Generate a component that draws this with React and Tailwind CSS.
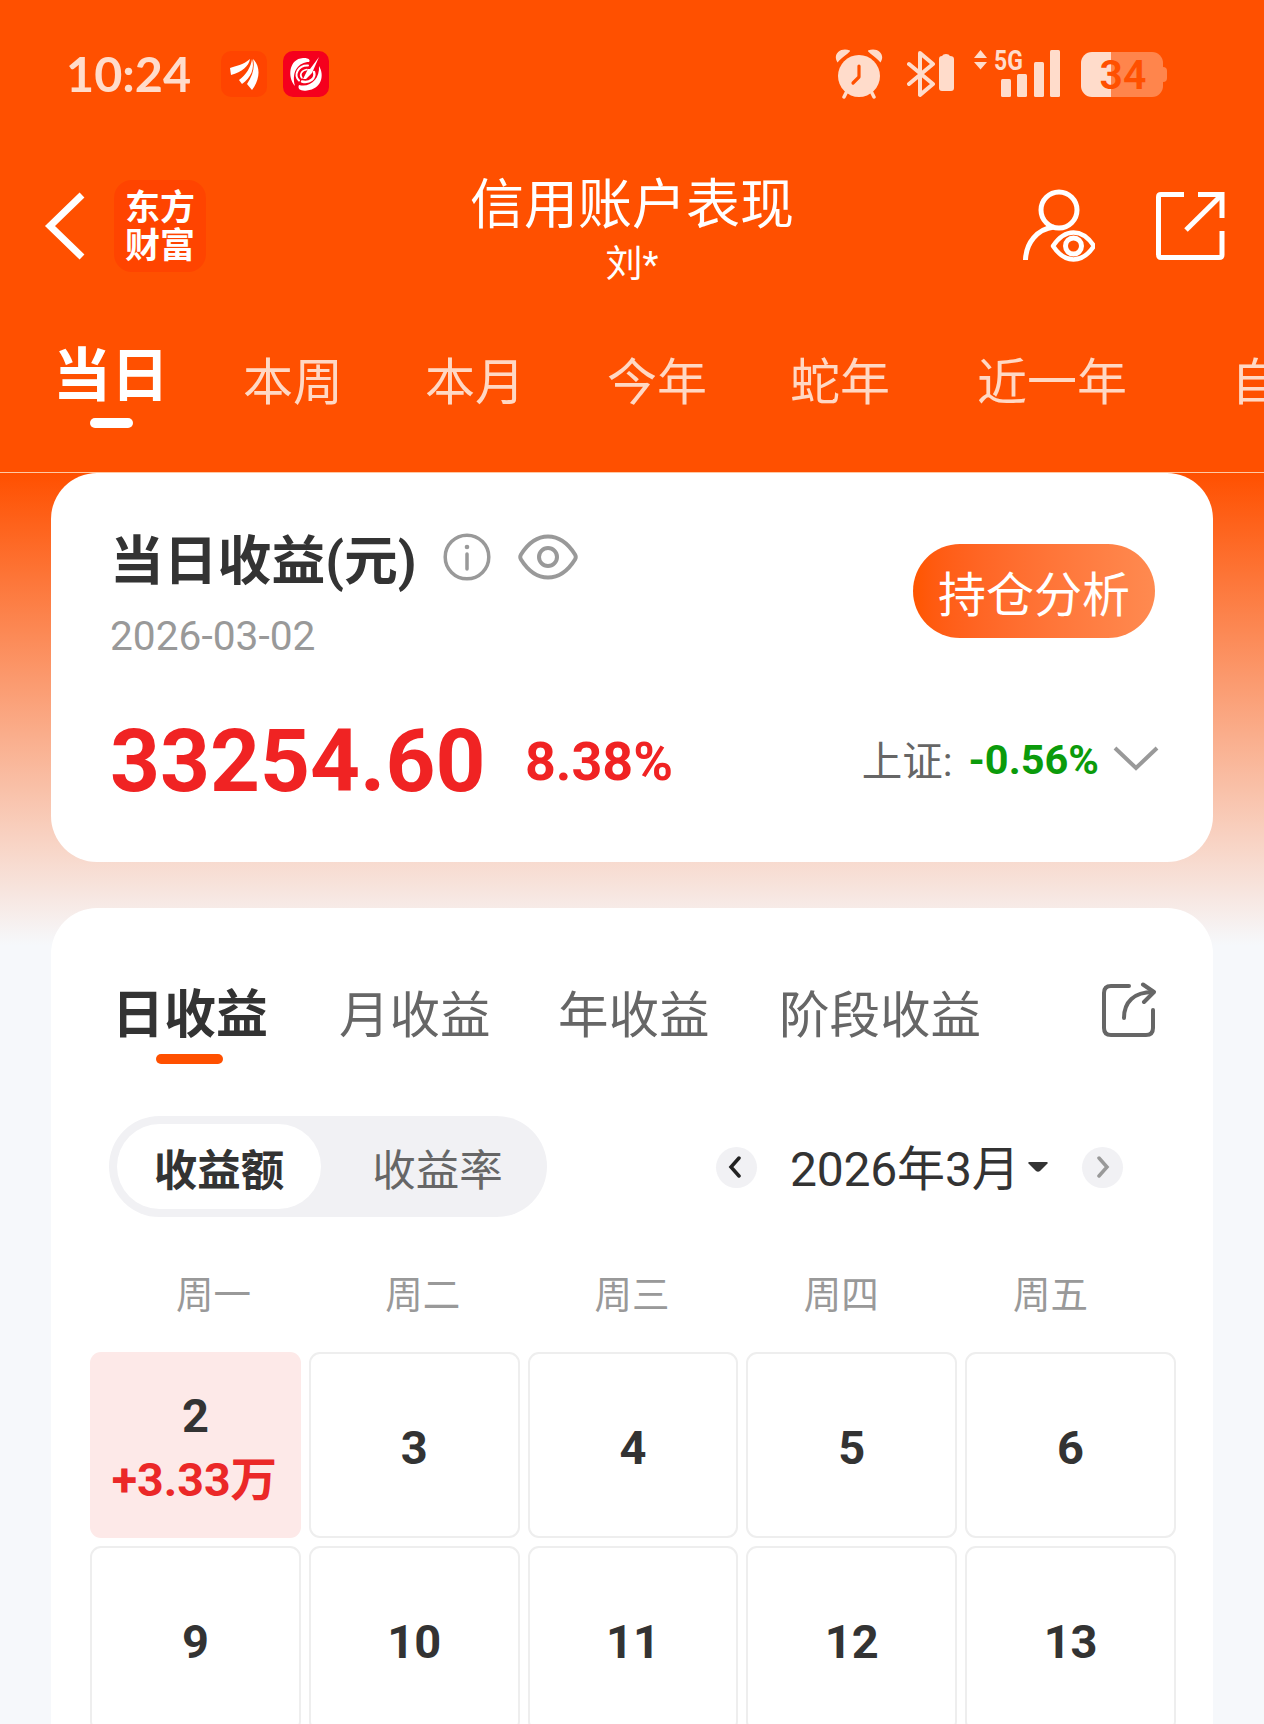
const PERIODS = [
  { label: "本周", className: "w-[182px]" },
  { label: "本月", className: "w-[182px]" },
  { label: "今年", className: "w-[183px]" },
  { label: "蛇年", className: "w-[187px]" },
  { label: "近一年", className: "w-[254px]" },
  { label: "自", className: "w-[160px]" },
]

const WEEKDAYS = ["周一", "周二", "周三", "周四", "周五"]

const DAYS = [
  { day: 2, profit: "+3.33万" },
  { day: 3 }, { day: 4 }, { day: 5 }, { day: 6 },
  { day: 9 }, { day: 10 }, { day: 11 }, { day: 12 }, { day: 13 },
]

function StatusBar() {
  return (
    <div className="h-[148px] flex items-center justify-between pl-[66px] pr-[97px] text-[#ffdccb]">
      <div className="flex items-center">
        <span className="w-[155px] -mt-[3px] font-['Lato'] font-bold text-[48.5px] leading-[52px]">10:24</span>

        <svg width="46" height="46" viewBox="0 0 46 46" className="mr-4">
          <rect width="46" height="46" rx="10" fill="#ff4400" />
          <g fill="#fff">
            <path d="M9 17C15 15 22 14 29 8C28 15 21 21 10 24Z" />
            <path d="M18 29C25 24 30 16 31 8C34 17 30 27 21 33Z" />
            <path d="M26 33C32 24 34 16 32 8C40 16 39 28 31 39Z" />
          </g>
        </svg>

        <svg width="46" height="46" viewBox="0 0 46 46">
          <rect width="46" height="46" rx="10" fill="#f5001d" />
          <path d="M12 35C4 26 6 8 20 7C25 6.500 28 9 26 11C16 11 8 20 12 35Z" fill="#fff" />
          <path d="M36 15C42 25 38 38 24 39.500C18 40.500 14 38 16 34C27 37 37 28 36 15Z" fill="#fff" />
          <g fill="none" stroke="#fff" strokeLinecap="round">
            <path d="M25 14.500C15 14 10.500 24 16 29.500" strokeWidth="2" />
            <path d="M31 21C33 27 27 32.500 19 30.500" strokeWidth="2.400" />
            <path d="M24 18.500C18.500 19 16 24 19 27" strokeWidth="1.600" />
          </g>
          <path d="M20 28L25 18L27 18L36 6L29 22L23 28Z" fill="#fff" />
        </svg>
      </div>

      <div className="flex items-center">
        {/* Alarma */}
        <svg width="48" height="50" viewBox="0 0 48 50" className="mr-[24px]">
          <circle cx="24" cy="27" r="21" fill="currentColor" />
          <path d="M2.500 13.500C-3 5 6-2.500 15 1.500C16 3 9 6.500 2.500 13.500ZM45.500 13.500C51 5 42-2.500 33 1.500C32 3 39 6.500 45.500 13.500Z" fill="currentColor" />
          <path d="M12 42L9 48M36 42L39 48" stroke="currentColor" strokeWidth="3.500" strokeLinecap="round" />
          <path d="M24 17V28L18 34" stroke="#ff5000" strokeWidth="3.200" fill="none" strokeLinecap="round" strokeLinejoin="round" />
        </svg>

        {/* Bluetooth con batería */}
        <svg width="47" height="48" viewBox="0 0 47 48" className="mr-5">
          <path d="M2 14L26 34L13 45V3L26 14L2 34" stroke="currentColor" strokeWidth="4" fill="none" strokeLinecap="round" strokeLinejoin="round" />
          <path d="M32 9Q32 6 35 6Q36 4 39 4Q42 4 43 6Q47 6 47 9V38Q47 41 44 41H35Q32 41 32 38Z" fill="currentColor" />
        </svg>

        {/* Señal */}
        <div className="relative w-[87px] h-[48px] mr-5">
          <svg width="87" height="48" viewBox="0 0 87 48" fill="currentColor">
            <path d="M6.500 0L13 8H0ZM0 12H13L6.500 19.500Z" />
            <rect x="27" y="29" width="10" height="18" rx="1.500" />
            <rect x="43" y="24" width="10" height="23" rx="1.500" />
            <rect x="60" y="12" width="10" height="35" rx="1.500" />
            <rect x="76" y="0" width="10" height="47" rx="1.500" />
          </svg>
          <span className="absolute left-[20px] -top-[3px] origin-left scale-x-[0.82] font-['Roboto'] font-bold text-[28px] leading-[28px]">5G</span>
        </div>

        {/* Batería */}
        <div className="flex items-center">
          <div className="w-[82px] h-[45px] rounded-[11px] bg-[linear-gradient(90deg,#ffdccb_30px,#ff854c_30px)] flex items-center justify-center">
            <span className="font-['Roboto'] font-semibold text-[41px] leading-[48px] text-[#ff5000] pl-[2px] pt-[2px]">34</span>
          </div>
          <div className="w-1 h-[15px] rounded-r-[4px] bg-[#ff854c]" />
        </div>
      </div>
    </div>
  )
}

function NavBar() {
  return (
    <div className="h-[156px] flex items-center justify-between pl-[44px] pr-[39px]">
      <div className="w-[425px] flex items-center">
        <svg width="42" height="70" viewBox="0 0 42 70" className="mr-7">
          <path d="M38 4L6 35L38 66" fill="none" stroke="#fff" strokeWidth="7" />
        </svg>
        <div className="w-[92px] h-[92px] rounded-[18px] bg-[#ff4400] flex flex-col items-center justify-center text-white font-bold text-[35px] leading-[38px] pt-1">
          <span>东方</span>
          <span>财富</span>
        </div>
      </div>

      <div className="flex flex-col items-center text-white pt-[13px]">
        <h1 className="text-[54px] leading-[70px] -mt-[4px]">信用账户表现</h1>
        <p className="text-[37px] leading-[50px] -mt-px">刘*</p>
      </div>

      <div className="w-[430px] flex items-center justify-end">
        <svg width="74" height="74" viewBox="0 0 74 74" fill="none" stroke="#fff" strokeWidth="5" className="mr-[61px]">
          <circle cx="38" cy="21" r="18" />
          <path d="M4.500 71C5 54 16 40 33 38" />
          <path d="M32 57C44 39 61 39 73 57C61 75 44 75 32 57Z" strokeWidth="4.500" strokeLinejoin="round" />
          <circle cx="52.500" cy="57" r="8" />
        </svg>
        <svg width="69" height="68" viewBox="0 0 69 68" fill="none" stroke="#fff" strokeWidth="5">
          <path d="M28 2.500H5Q2.500 2.500 2.500 5V62Q2.500 65.500 5 65.500H63Q66 65.500 66 63V39" />
          <path d="M42 2.500H66V26" />
          <path d="M65 3.500L30 38" />
        </svg>
      </div>
    </div>
  )
}

function PeriodTabs() {
  return (
    <div className="h-[168px] flex pl-[53px] overflow-hidden whitespace-nowrap">
      <div className="w-[190px] shrink-0 pt-10">
        <p className="text-white font-bold text-[58px] leading-[64px]">当日</p>
        <div className="ml-[37px] mt-[10px] w-[43px] h-[10px] rounded-full bg-white" />
      </div>
      {PERIODS.map((p) => (
        <span key={p.label} className={`shrink-0 pt-[49px] text-[50px] leading-[60px] text-[#ffd8c4] ${p.className}`}>
          {p.label}
        </span>
      ))}
    </div>
  )
}

function SummaryCard() {
  return (
    <section className="h-[389px] rounded-[46px] bg-white pl-[59px] pr-[54px] pt-[50px]">
      <div className="flex justify-between">
        <div>
          <div className="flex items-center h-[68px]">
            <h2 className="w-[333px] text-[#333] font-bold text-[53.8px] leading-[68px] pt-[10px] whitespace-nowrap">当日收益(元)</h2>
            <svg width="48" height="48" viewBox="0 0 48 48" fill="none" stroke="#999" className="mr-[27px]">
              <circle cx="24" cy="24" r="21.800" strokeWidth="3.500" />
              <path d="M24 21V36" strokeWidth="3.500" strokeLinecap="round" />
              <circle cx="24" cy="14" r="2.300" fill="#999" stroke="none" />
            </svg>
            <svg width="60" height="46" viewBox="0 0 60 46" fill="none" stroke="#999" strokeWidth="4">
              <path d="M3 20.500C18-3.500 42-3.500 57 20.500Q58.500 23 57 25.500C42 49.500 18 49.500 3 25.500Q1.500 23 3 20.500Z" />
              <circle cx="30" cy="23" r="9" />
            </svg>
          </div>
          <p className="mt-[21px] text-[#999] text-[40.7px] leading-[48px]">2026-03-02</p>
        </div>
        <button className="mt-[21px] mr-1 w-[242px] h-[94px] rounded-full bg-linear-to-r from-[#ff5500] to-[#ff8a50] text-white text-[48px] pt-[9px]">
          <span className="block leading-[84px]">持仓分析</span>
        </button>
      </div>

      <div className="flex items-center justify-between mt-[49px] h-[104px]">
        <div className="flex items-center font-bold text-[#f02323]">
          <span className="w-[415px] text-[87.2px] leading-[104px]">33254.60</span>
          <span className="text-[53.8px] leading-[104px] pt-px">8.38%</span>
        </div>
        <div className="flex items-center">
          <span className="text-[#666] text-[40.5px] leading-[60px] mr-4 pt-px">上证:</span>
          <span className="text-[#0b9b0b] font-bold text-[41.5px] leading-[60px] mr-[14px] -mt-[2px]">-0.56%</span>
          <svg width="46" height="26" viewBox="0 0 46 26" className="-mt-1">
            <path d="M2 2L23 22L44 2" fill="none" stroke="#999" strokeWidth="4" />
          </svg>
        </div>
      </div>
    </section>
  )
}

function ProfitTabs() {
  return (
    <div className="flex items-start pl-[61px] pr-[56px] pt-[74px] h-[208px] text-[50.5px] leading-[68px] text-[#666]">
      <div className="w-[227px]">
        <p className="font-bold text-[52px] text-[#333]">日收益</p>
        <div className="ml-[44px] mt-[4px] w-[67px] h-[10px] rounded-full bg-[#ff5000]" />
      </div>
      <span className="w-[219px]">月收益</span>
      <span className="w-[221px]">年收益</span>
      <span className="flex-1">阶段收益</span>
      <svg width="56" height="56" viewBox="0 0 56 56" fill="none" stroke="#666" strokeWidth="4" strokeLinecap="round" strokeLinejoin="round">
        <path d="M28 4H10Q3 4 3 11V46Q3 53 10 53H45Q52 53 52 46V28" />
        <path d="M23 36C23 20 33 10 52 10" />
        <path d="M42 2.500L53 10L43 20" />
      </svg>
    </div>
  )
}

function Toolbar() {
  return (
    <div className="flex items-center justify-between pl-[58px] pr-[90px] h-[101px]">
      <div className="w-[438px] h-[101px] p-2 rounded-full bg-[#f1f1f4] flex text-[43.5px] leading-[84px] text-center">
        <span className="w-[204px] h-[85px] pt-[6px] rounded-full bg-white font-bold text-[#333]">收益额</span>
        <span className="flex-1 pt-[6px] text-[#666] pl-[15px]">收益率</span>
      </div>

      <div className="flex items-center">
        <button className="w-[41px] h-[41px] mt-px rounded-full bg-[#f1f1f4] flex items-center justify-center">
          <svg width="14" height="22" viewBox="0 0 14 22" className="-ml-[3px]">
            <path d="M11 2L3 11L11 20" fill="none" stroke="#222" strokeWidth="3.500" strokeLinecap="round" />
          </svg>
        </button>
        <span className="w-[239px] pl-px ml-[32px] pt-[6px] text-[#333] text-[48px] tracking-[-0.2px] leading-[60px] whitespace-nowrap">2026年3月</span>
        <svg width="20" height="10" viewBox="0 0 20 10" className="mr-[34px]">
          <path d="M1 0H19Q20 0 19.500 1.500L12 9Q10 10.500 8 9L0.500 1.500Q0 0 1 0Z" fill="#333" />
        </svg>
        <button className="w-[41px] h-[41px] mt-px rounded-full bg-[#f1f1f4] flex items-center justify-center">
          <svg width="14" height="22" viewBox="0 0 14 22" className="ml-px">
            <path d="M3 2L11 11L3 20" fill="none" stroke="#999" strokeWidth="3.500" strokeLinecap="round" />
          </svg>
        </button>
      </div>
    </div>
  )
}

function Calendar() {
  return (
    <div>
      <div className="grid grid-cols-5 px-[58px] mt-[49px] mb-[28px] text-center text-[#999] text-[37.5px] leading-[58px]">
        {WEEKDAYS.map((w) => (
          <span key={w}>{w}</span>
        ))}
      </div>
      <div className="grid grid-cols-5 gap-2 pl-[39px] pr-[37px]">
        {DAYS.map(({ day, profit }) => (
          <div
            key={day}
            className={`h-[186px] pt-[5px] rounded-[11px] flex flex-col items-center justify-center font-bold text-[47px] leading-[64px] text-[#333] ${
              profit ? "bg-[#fde9e8]" : "border-2 border-[#eee]"
            }`}
          >
            <span>{day}</span>
            {profit && <span className="text-[#eb2828] text-[46.5px] pr-[2px]">{profit}</span>}
          </div>
        ))}
      </div>
    </div>
  )
}

export default function App() {
  return (
    <div className="w-[1264px] h-[1724px] overflow-hidden bg-[#f6f8fb] font-['Roboto','Noto_Sans_CJK_SC',sans-serif]">
      <header className="bg-[#ff5000]">
        <StatusBar />
        <NavBar />
        <PeriodTabs />
      </header>
      <main className="border-t border-[#ffc9a4] px-[51px] bg-[linear-gradient(180deg,#ff5000_0px,#f6f8fb_472px)]">
        <SummaryCard />
        <section className="mt-[46px] h-[900px] rounded-t-[46px] bg-white">
          <ProfitTabs />
          <Toolbar />
          <Calendar />
        </section>
      </main>
    </div>
  )
}
